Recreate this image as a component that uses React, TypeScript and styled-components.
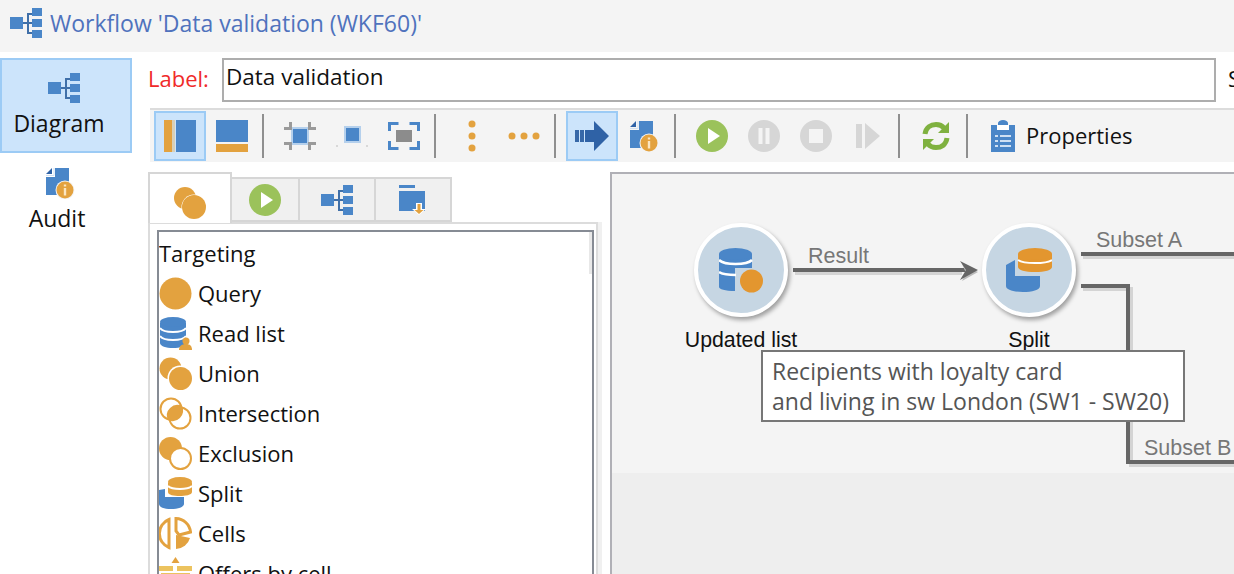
import React from "react";
import styled, { createGlobalStyle } from "styled-components";

const BLUE = "#4a86c8";
const ORANGE = "#e3a23f";
const GREY = "#d6d6d6";

const Global = createGlobalStyle`
  html, body { margin: 0; padding: 0; background: #fff; }
  body { font-family: "Open Sans", "Noto Sans", sans-serif; color: #111; }
  * { box-sizing: border-box; }
`;

/* icons */
const FlowIcon = ({ w = 32 }: { w?: number }) => (
  <svg width={w} height={w} viewBox="0 0 32 30">
    <rect x="0" y="9" width="13" height="12" fill={BLUE} />
    <path d="M13 15h5M22 6h-4v19h4M18 15h4" stroke="#3f6fa8" strokeWidth="2" fill="none" />
    <rect x="22" y="0" width="10" height="8" fill={BLUE} />
    <rect x="22" y="11" width="10" height="8" fill={BLUE} />
    <rect x="22" y="22" width="10" height="8" fill={BLUE} />
  </svg>
);

const AuditIcon = () => (
  <svg width="30" height="32" viewBox="0 0 30 32">
    <path d="M10 1h14v27H1V10h9z" fill={BLUE} />
    <path d="M1 7l6-6v6z" fill="#2f62a6" />
    <path d="M1 8.500h8V1" stroke="#cfe0f3" strokeWidth="1" fill="none" />
    <circle cx="20" cy="23" r="9.500" fill="#f4f4f4" />
    <circle cx="20" cy="23" r="8.500" fill={ORANGE} />
    <rect x="18.800" y="21" width="2.400" height="7.500" fill="#fbe6c2" />
    <rect x="18.800" y="17.500" width="2.400" height="2" fill="#fbe6c2" />
  </svg>
);

const PanelV = () => (
  <svg width="32" height="32" viewBox="0 0 32 32">
    <rect x="0" y="0" width="8" height="32" fill={ORANGE} />
    <rect x="8" y="0" width="3" height="32" fill="#d8d0b8" />
    <rect x="12" y="0" width="20" height="32" fill={BLUE} />
  </svg>
);

const PanelH = () => (
  <svg width="32" height="32" viewBox="0 0 32 32">
    <rect x="0" y="0" width="32" height="22" fill={BLUE} />
    <rect x="0" y="24" width="32" height="8" fill={ORANGE} />
  </svg>
);

const FitIcon = () => (
  <svg width="32" height="28" viewBox="0 0 32 28">
    <rect x="7" y="5" width="18" height="18" fill="#b5d0ec" />
    <rect x="9" y="7" width="14" height="14" fill={BLUE} />
    <path d="M0 6.500h6.500V0M32 6.500h-6.500V0M0 21.500h6.500V28M32 21.500h-6.500V28" stroke="#9a9a9a" strokeWidth="3" fill="none" />
  </svg>
);

const DotIcon = () => (
  <svg width="32" height="28" viewBox="0 0 32 28">
    <rect x="8" y="4" width="17" height="17" fill="#b5d0ec" />
    <rect x="10" y="6" width="13" height="13" fill={BLUE} />
    <rect x="0" y="23" width="2" height="2" fill="#d8d8d8" />
    <rect x="30" y="23" width="2" height="2" fill="#d8d8d8" />
  </svg>
);

const FrameIcon = () => (
  <svg width="32" height="28" viewBox="0 0 32 28">
    <rect x="8" y="8" width="16" height="12" fill="#8c8c8c" />
    <path d="M1.500 9V1.500h9M30.500 9V1.500h-9M1.500 19v7.500h9M30.500 19v7.500h-9" stroke={BLUE} strokeWidth="3" fill="none" />
  </svg>
);

const DotsV = () => (
  <svg width="10" height="32" viewBox="0 0 10 32">
    <circle cx="5" cy="4" r="3.500" fill={ORANGE} />
    <circle cx="5" cy="16" r="3.500" fill={ORANGE} />
    <circle cx="5" cy="28" r="3.500" fill={ORANGE} />
  </svg>
);

const DotsH = () => (
  <svg width="32" height="10" viewBox="0 0 32 10">
    <circle cx="4" cy="5" r="3.500" fill={ORANGE} />
    <circle cx="16" cy="5" r="3.500" fill={ORANGE} />
    <circle cx="28" cy="5" r="3.500" fill={ORANGE} />
  </svg>
);

const ArrowIcon = () => (
  <svg width="34" height="32" viewBox="0 0 34 32">
    <rect x="0" y="10" width="4" height="12" fill="#3768a8" />
    <rect x="5" y="10" width="4" height="12" fill="#3768a8" />
    <path d="M10 10h9V1l15 15-15 15v-9h-9z" fill="#2f62a6" />
  </svg>
);

const RoundIcon = ({ color, children }: { color: string; children?: React.ReactNode }) => (
  <svg width="32" height="32" viewBox="0 0 32 32">
    <circle cx="16" cy="16" r="16" fill={color} />
    {children}
  </svg>
);

const PlayIcon = () => (
  <RoundIcon color="#9bc25b">
    <path d="M12 8l12 8-12 8z" fill="#fff" />
  </RoundIcon>
);

const PauseIcon = () => (
  <RoundIcon color={GREY}>
    <rect x="10.500" y="8" width="4" height="16" fill="#f4f4f4" />
    <rect x="17.500" y="8" width="4" height="16" fill="#f4f4f4" />
  </RoundIcon>
);

const StopIcon = () => (
  <RoundIcon color={GREY}>
    <rect x="9" y="9" width="14" height="14" fill="#f4f4f4" />
  </RoundIcon>
);

const StepIcon = () => (
  <svg width="26" height="32" viewBox="0 0 26 32">
    <rect x="1" y="4" width="6" height="24" fill={GREY} />
    <path d="M10 3l15 13-15 13z" fill={GREY} />
  </svg>
);

const RefreshIcon = () => (
  <svg width="28" height="30" viewBox="0 0 28 30">
    <path d="M3 13C4 6 9 3.500 14 3.500c3 0 6 1 8 3.500" stroke="#7fb13f" strokeWidth="5" fill="none" />
    <path d="M27 1v11H16z" fill="#7fb13f" />
    <path d="M25 17c-1 7-6 9.500-11 9.500-3 0-6-1-8-3.500" stroke="#7fb13f" strokeWidth="5" fill="none" />
    <path d="M1 29V18h11z" fill="#7fb13f" />
  </svg>
);

const ClipIcon = () => (
  <svg width="24" height="32" viewBox="0 0 24 32">
    <path d="M0 5h7V3a5 3 0 0 1 10 0v2h7v27H0z" fill={BLUE} />
    <rect x="6" y="5" width="12" height="5" fill="#fff" />
    <path d="M4 16h3M9 16h11M4 21h3M9 21h11M4 26h3M9 26h11" stroke="#cfe0f3" strokeWidth="2" />
  </svg>
);

const TabCircles = () => (
  <svg width="32" height="32" viewBox="0 0 32 32">
    <circle cx="11" cy="11" r="11" fill={ORANGE} />
    <circle cx="20" cy="20" r="12.500" fill="#fff" />
    <circle cx="20" cy="20" r="12" fill={ORANGE} />
  </svg>
);

const TabFolder = () => (
  <svg width="28" height="30" viewBox="0 0 28 30">
    <rect x="0" y="0" width="16" height="3" fill={BLUE} />
    <path d="M0 6h26v20H0z" fill={BLUE} />
    <path d="M17 18h6v6h4l-7 6-7-6h4z" fill="#fff" />
    <path d="M18.500 19h3v6h3l-4.500 4-4.500-4h3z" fill={ORANGE} />
  </svg>
);

const Db = () => (
  <>
    <path d="M1 6v20c0 3 6 5 13 5s13-2 13-5V6z" fill={BLUE} />
    <ellipse cx="14" cy="5" rx="13" ry="5" fill={BLUE} />
    <path d="M1 11c2 3 7 4 13 4s11-1 13-4M1 19c2 3 7 4 13 4s11-1 13-4" stroke="#fff" strokeWidth="2" fill="none" />
  </>
);

const QueryIcon = () => (
  <svg width="33" height="33" viewBox="0 0 33 33">
    <circle cx="16.500" cy="16.500" r="16" fill={ORANGE} />
  </svg>
);
const ReadIcon = () => (
  <svg width="33" height="33" viewBox="0 0 33 33">
    <Db />
    <circle cx="27" cy="24" r="3.500" fill={ORANGE} />
    <path d="M20 33c0-4 3-6 7-6s6 2 6 6z" fill={ORANGE} />
  </svg>
);
const UnionIcon = () => (
  <svg width="33" height="33" viewBox="0 0 33 33">
    <circle cx="11.500" cy="11.500" r="11" fill={ORANGE} />
    <circle cx="21" cy="21" r="12.500" fill="#fff" />
    <circle cx="21.500" cy="21.500" r="11.500" fill={ORANGE} />
  </svg>
);
const InterIcon = () => (
  <svg width="33" height="33" viewBox="0 0 33 33">
    <circle cx="12" cy="12" r="10.500" fill="none" stroke={ORANGE} strokeWidth="2" />
    <circle cx="21" cy="21" r="10.500" fill="none" stroke={ORANGE} strokeWidth="2" />
    <path d="M9 23A10.500 10.500 0 0 1 23 9 10.500 10.500 0 0 1 9 23z" fill={ORANGE} />
  </svg>
);
const ExclIcon = () => (
  <svg width="33" height="33" viewBox="0 0 33 33">
    <circle cx="11.500" cy="11.500" r="11.500" fill={ORANGE} />
    <circle cx="21.500" cy="21.500" r="10.500" fill="#fff" stroke={ORANGE} strokeWidth="2" />
  </svg>
);
const SplitIcon = () => (
  <svg width="33" height="33" viewBox="0 0 33 33">
    <path d="M0 13v14c0 3 5 5 12 5s13-2 13-5v-7H6v-8z" fill={BLUE} />
    <path d="M9 6v9c0 3 6 4 11.500 4S33 18 33 15V6z" fill={ORANGE} />
    <ellipse cx="21" cy="5" rx="12" ry="5" fill={ORANGE} />
    <path d="M9 9c2 2 6 3 12 3s10-1 12-3" stroke="#fff" strokeWidth="2" fill="none" />
  </svg>
);
const CellsIcon = () => (
  <svg width="33" height="33" viewBox="0 0 33 33">
    <path d="M10 2.500A15 15 0 0 0 10 30.500z" fill="none" stroke={ORANGE} strokeWidth="3" />
    <path d="M17 1.500A15 15 0 0 1 31.500 15L20 18l-3-4z" fill="none" stroke={ORANGE} strokeWidth="3" />
    <path d="M17 18l14 3A15 15 0 0 1 17 32z" fill={ORANGE} />
  </svg>
);
const OffersIcon = () => (
  <svg width="33" height="33" viewBox="0 0 33 33">
    <path d="M16.500 0l4 6h-8z" fill={ORANGE} />
    <rect x="0" y="9" width="14" height="5" fill="#ecc35f" />
    <rect x="18" y="9" width="15" height="5" fill="#ecc35f" />
    <rect x="2" y="16" width="29" height="16" fill="#ecc35f" />
  </svg>
);

const NodeListIcon = () => (
  <svg width="44" height="45" viewBox="0 0 44 45">
    <path d="M0 6v33c0 2 6 4 16 4V6zM16 6h17v14H16z" fill={BLUE} />
    <ellipse cx="16.500" cy="6" rx="16.500" ry="6" fill={BLUE} />
    <path d="M0 12c3 3 9 4 16.500 4S30 15 33 12M0 24c3 2 9 3 17 3" stroke="#fff" strokeWidth="2.500" fill="none" />
    <circle cx="32" cy="33" r="13" fill="#c6d6e3" />
    <circle cx="32.500" cy="33" r="11.500" fill="#e3962f" />
  </svg>
);

const NodeSplitIcon = () => (
  <svg width="46" height="44" viewBox="0 0 46 44">
    <path d="M0 17v21c0 4 8 6 17 6s17-2 17-6V28H9V12z" fill={BLUE} />
    <path d="M12 6v13c0 3 7 5 17 5s17-2 17-5V6z" fill="#e3962f" />
    <ellipse cx="29" cy="6" rx="17" ry="6" fill="#e3962f" />
    <path d="M12 12c3 2 9 3 17 3s14-1 17-3" stroke="#fff" strokeWidth="2" fill="none" />
  </svg>
);

/* layout */
const Page = styled.div`
  width: 1234px;
  height: 574px;
  overflow: hidden;
  display: flex;
  flex-direction: column;
  background: #fff;
`;

const TitleBar = styled.header`
  height: 52px;
  flex: none;
  background: #f4f4f4;
  display: flex;
  align-items: center;
  gap: 8px;
  padding: 0 0 6px 10px;
  font-size: 23px;
  color: #4f72bd;
`;

const Body = styled.div`
  flex: 1;
  min-height: 0;
  display: flex;
`;

const Nav = styled.nav`
  width: 132px;
  flex: none;
  padding-top: 6px;
  display: flex;
  flex-direction: column;
`;

const NavItem = styled.div<{ $active?: boolean; $inset: number }>`
  height: 95px;
  display: flex;
  flex-direction: column;
  align-items: center;
  padding: 12px ${(p) => p.$inset}px 0 0;
  gap: 4px;
  font-size: 23px;
  line-height: 30px;
  background: ${(p) => (p.$active ? "#cce4fb" : "transparent")};
  border: 2px solid ${(p) => (p.$active ? "#9ccbf5" : "transparent")};
`;

const NavIcon = styled.span<{ $shift: number }>`
  display: flex;
  margin-left: ${(p) => p.$shift}px;
`;

const Main = styled.main`
  flex: 1;
  min-width: 0;
  padding: 6px 0 0 16px;
  display: flex;
  flex-direction: column;
`;

const LabelRow = styled.div`
  height: 44px;
  flex: none;
  display: flex;
  align-items: center;
  font-size: 22.500px;
  white-space: nowrap;
`;

const LabelText = styled.label`
  color: #f02a2a;
  width: 74px;
  flex: none;
  font-size: 22px;
  margin-top: -4px;
`;

const TextBox = styled.div`
  width: 994px;
  height: 44px;
  flex: none;
  border: 2px solid #adadad;
  padding-left: 2px;
  line-height: 33px;
`;

const Clipped = styled.span`
  margin-left: 12px;
  margin-top: -4px;
`;

const Toolbar = styled.div`
  height: 54px;
  flex: none;
  margin: 6px 0 0 2px;
  padding: 2px 0 2px 4px;
  background: #f4f4f4;
  border-top: 2px solid #dcdcdc;
  display: flex;
  align-items: center;
`;

const ToolButton = styled.div<{ $active?: boolean }>`
  width: 52px;
  height: 50px;
  flex: none;
  display: flex;
  align-items: center;
  justify-content: center;
  background: ${(p) => (p.$active ? "#cce4fb" : "transparent")};
  border: 2px solid ${(p) => (p.$active ? "#9ccbf5" : "transparent")};
`;

const ToolSep = styled.div`
  width: 2px;
  height: 44px;
  flex: none;
  margin: 0 10px 0 4px;
  background: #8f8f8f;
`;

const PropertiesButton = styled.div`
  display: flex;
  align-items: center;
  gap: 11px;
  margin-left: 13px;
  font-size: 22px;
  line-height: 30px;
`;

const PropertiesText = styled.span`
  margin-top: -2px;
`;

const Workspace = styled.div`
  flex: 1;
  min-height: 0;
  margin-top: 10px;
  display: flex;
  gap: 12px;
`;

const LeftPane = styled.section`
  width: 450px;
  flex: none;
  display: flex;
  flex-direction: column;
`;

const Tabs = styled.div`
  height: 50px;
  flex: none;
  display: flex;
  align-items: flex-end;
`;

const Tab = styled.div<{ $active?: boolean; $w: number }>`
  width: ${(p) => p.$w}px;
  height: ${(p) => (p.$active ? 51 : 45)}px;
  margin-bottom: ${(p) => (p.$active ? -1 : 0)}px;
  position: relative;
  z-index: ${(p) => (p.$active ? 1 : 0)};
  display: flex;
  align-items: center;
  justify-content: center;
  padding-top: ${(p) => (p.$active ? 8 : 0)}px;
  background: ${(p) => (p.$active ? "#fff" : "#f0f0f0")};
  border: 2px solid #d6d6d6;
  border-left-width: ${(p) => (p.$active ? 2 : 0)}px;
  border-bottom-width: ${(p) => (p.$active ? 0 : 2)}px;
`;

const TabPanel = styled.div`
  flex: 1;
  min-height: 0;
  border: 2px solid #dcdcdc;
  border-bottom: 0;
  box-shadow: 4px 0 0 #f0f0f0;
  padding: 6px 2px 0 7px;
`;

const ListBox = styled.div`
  position: relative;
  height: 100%;
  border: 2px solid #868b94;
  border-bottom: 0;
  padding: 1px 0 0 0;
  overflow: hidden;

  &::after {
    content: "";
    position: absolute;
    top: 0;
    right: 0;
    width: 3px;
    height: 42px;
    background: #e8e8e8;
  }
`;

const ListRow = styled.div`
  height: 40px;
  display: flex;
  align-items: center;
  gap: 6px;
  font-size: 22px;
  white-space: nowrap;
`;

const Canvas = styled.section`
  position: relative;
  flex: 1;
  min-width: 0;
  overflow: hidden;
  border: 2px solid #b0b0b6;
  border-right: 0;
  border-bottom: 0;
  background: linear-gradient(#f4f4f4 0 299px, #eeeeee 299px);
`;

const Edges = styled.svg`
  position: absolute;
  left: 0;
  top: 0;
`;

const Node = styled.div<{ $x: number }>`
  position: absolute;
  left: ${(p) => p.$x}px;
  top: 49px;
  width: 94px;
  height: 94px;
  border-radius: 50%;
  background: #c6d6e3;
  border: 4px solid #fff;
  box-shadow: 2px 3px 4px rgba(0, 0, 0, 0.35);
  display: flex;
  align-items: center;
  justify-content: center;
`;

const NodeCaption = styled.div<{ $x: number }>`
  position: absolute;
  left: ${(p) => p.$x}px;
  top: 154px;
  width: 140px;
  text-align: center;
  font-family: "Liberation Sans", Arial, sans-serif;
  font-size: 21.300px;
  line-height: 24px;
  color: #111;
`;

const EdgeLabel = styled.div<{ $x: number; $y: number }>`
  position: absolute;
  left: ${(p) => p.$x}px;
  top: ${(p) => p.$y}px;
  font-family: "Liberation Sans", Arial, sans-serif;
  font-size: 21.500px;
  line-height: 24px;
  color: #777;
  white-space: nowrap;
`;

const Note = styled.div`
  position: absolute;
  left: 149px;
  top: 176px;
  width: 424px;
  height: 72px;
  background: #fff;
  border: 2px solid #777;
  padding: 4px 0 0 9px;
  font-size: 23px;
  line-height: 30px;
  color: #555;
  white-space: nowrap;
`;

const listItems: [string, React.ComponentType][] = [
  ["Query", QueryIcon],
  ["Read list", ReadIcon],
  ["Union", UnionIcon],
  ["Intersection", InterIcon],
  ["Exclusion", ExclIcon],
  ["Split", SplitIcon],
  ["Cells", CellsIcon],
  ["Offers by cell", OffersIcon],
];

export default function App() {
  return (
    <Page>
      <Global />
      <TitleBar>
        <FlowIcon />
        <span>Workflow 'Data validation (WKF60)'</span>
      </TitleBar>
      <Body>
        <Nav>
          <NavItem $active $inset={14}>
            <NavIcon $shift={9}><FlowIcon /></NavIcon>
            Diagram
          </NavItem>
          <NavItem $inset={18}>
            <NavIcon $shift={6}><AuditIcon /></NavIcon>
            Audit
          </NavItem>
        </Nav>
        <Main>
          <LabelRow>
            <LabelText>Label:</LabelText>
            <TextBox>Data validation</TextBox>
            <Clipped>S</Clipped>
          </LabelRow>
          <Toolbar>
            <ToolButton $active><PanelV /></ToolButton>
            <ToolButton><PanelH /></ToolButton>
            <ToolSep />
            <ToolButton><FitIcon /></ToolButton>
            <ToolButton><DotIcon /></ToolButton>
            <ToolButton><FrameIcon /></ToolButton>
            <ToolSep />
            <ToolButton><DotsV /></ToolButton>
            <ToolButton><DotsH /></ToolButton>
            <ToolSep />
            <ToolButton $active><ArrowIcon /></ToolButton>
            <ToolButton><AuditIcon /></ToolButton>
            <ToolSep />
            <ToolButton><PlayIcon /></ToolButton>
            <ToolButton><PauseIcon /></ToolButton>
            <ToolButton><StopIcon /></ToolButton>
            <ToolButton><StepIcon /></ToolButton>
            <ToolSep />
            <ToolButton><RefreshIcon /></ToolButton>
            <ToolSep />
            <PropertiesButton>
              <ClipIcon />
              <PropertiesText>Properties</PropertiesText>
            </PropertiesButton>
          </Toolbar>
          <Workspace>
            <LeftPane>
              <Tabs>
                <Tab $active $w={84}><TabCircles /></Tab>
                <Tab $w={68}><PlayIcon /></Tab>
                <Tab $w={76}><FlowIcon /></Tab>
                <Tab $w={76}><TabFolder /></Tab>
              </Tabs>
              <TabPanel>
                <ListBox>
                  <ListRow>Targeting</ListRow>
                  {listItems.map(([name, Icon]) => (
                    <ListRow key={name}>
                      <Icon />
                      {name}
                    </ListRow>
                  ))}
                </ListBox>
              </TabPanel>
            </LeftPane>
            <Canvas>
              <Edges width="624" height="400">
                <g fill="none" stroke="#d4d4d4" strokeWidth="4">
                  <path d="M183 99H350" />
                  <path d="M471 83H624" />
                  <path d="M471 115H519V291H624" />
                </g>
                <g fill="none" stroke="#666" strokeWidth="4">
                  <path d="M181 96H354" />
                  <path d="M469 80H624" />
                  <path d="M469 112H516V288H624" />
                </g>
                <path d="M350 90l16 8-16 9 4-8z" fill="#bbb" />
                <path d="M348 87l18 9-18 10 6-10z" fill="#666" />
              </Edges>
              <Node $x={82}>
                <NodeListIcon />
              </Node>
              <NodeCaption $x={59}>Updated list</NodeCaption>
              <EdgeLabel $x={196} $y={70}>Result</EdgeLabel>
              <Node $x={370}>
                <NodeSplitIcon />
              </Node>
              <NodeCaption $x={347}>Split</NodeCaption>
              <EdgeLabel $x={484} $y={54}>Subset A</EdgeLabel>
              <EdgeLabel $x={532} $y={262}>Subset B</EdgeLabel>
              <Note>
                Recipients with loyalty card
                <br />
                and living in sw London (SW1 - SW20)
              </Note>
            </Canvas>
          </Workspace>
        </Main>
      </Body>
    </Page>
  );
}
